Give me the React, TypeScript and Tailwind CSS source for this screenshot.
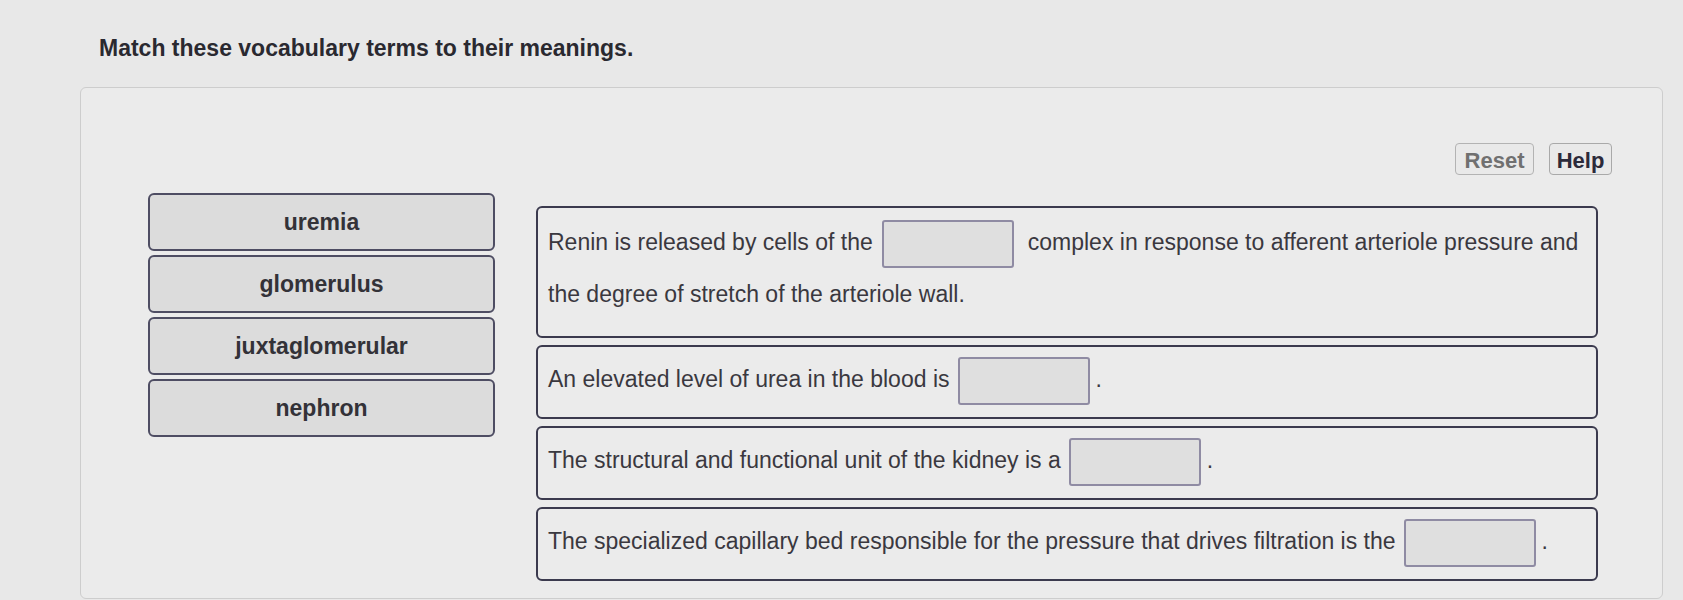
const terms = ['uremia', 'glomerulus', 'juxtaglomerular', 'nephron'];

const Blank = ({ className = '' }: { className?: string }) => (
  <span
    className={`inline-block h-[48px] w-[132px] rounded-[3px] border-2 border-[#8f8ba3] bg-[#dfdfdf] align-middle ${className}`}
  />
);

const Card = ({ children, className = '' }: { children: React.ReactNode; className?: string }) => (
  <div
    className={`rounded-md border-2 border-[#3b3a4e] bg-[#ebebeb] px-[10px] pt-[6px] pb-[12px] text-[23px] leading-[52px] text-[#3a383f] ${className}`}
  >
    {children}
  </div>
);

export default function App() {
  return (
    <div
      className="min-h-screen bg-[#e8e8e8] pt-[34px] pl-[99px]"
      style={{ fontFamily: '"Liberation Sans", Arial, sans-serif' }}
    >
      <h1 className="text-[23px] leading-[28px] font-bold text-[#2a2930]">
        Match these vocabulary terms to their meanings.
      </h1>

      <div className="mt-[25px] ml-[-19px] h-[512px] w-[1583px] rounded-md border border-[#cdcdcd] bg-[#ebebeb] pt-[55px] pr-[50px] pl-[67px]">
        {/* toolbar */}
        <div className="flex justify-end gap-[15px]">
          <button className="h-[32px] w-[79px] rounded-[4px] border border-[#b3b3b3] bg-[#e9e9e9] text-[22px] font-bold text-[#707070]">
            Reset
          </button>
          <button className="h-[32px] w-[63px] rounded-[4px] border border-[#a9a9a9] bg-[#e9e9e9] text-[22px] font-bold text-[#2c2a3a]">
            Help
          </button>
        </div>

        <div className="mt-[18px] flex items-start gap-[41px]">
          {/* term tiles */}
          <div className="flex w-[347px] shrink-0 flex-col gap-[4px]">
            {terms.map((t) => (
              <div
                key={t}
                className="flex h-[58px] items-center justify-center rounded-md border-2 border-[#4e4d63] bg-[#dcdcdc] text-[23px] font-bold text-[#333238]"
              >
                {t}
              </div>
            ))}
          </div>

          {/* sentences */}
          <div className="mt-[13px] mr-[14px] flex flex-1 flex-col gap-[7px]">
            <Card className="pt-[8px] pb-[16px]">
              Renin is released by cells of the
              <Blank className="mr-[14px] ml-[9px]" />
              complex in response to afferent arteriole pressure and the degree of stretch of the arteriole wall.
            </Card>
            <Card>
              An elevated level of urea in the blood is
              <Blank className="mr-[6px] ml-[8px]" />.
            </Card>
            <Card>
              The structural and functional unit of the kidney is a
              <Blank className="mr-[6px] ml-[8px]" />.
            </Card>
            <Card>
              The specialized capillary bed responsible for the pressure that drives filtration is the
              <Blank className="mr-[6px] ml-[8px]" />.
            </Card>
          </div>
        </div>
      </div>
    </div>
  );
}
